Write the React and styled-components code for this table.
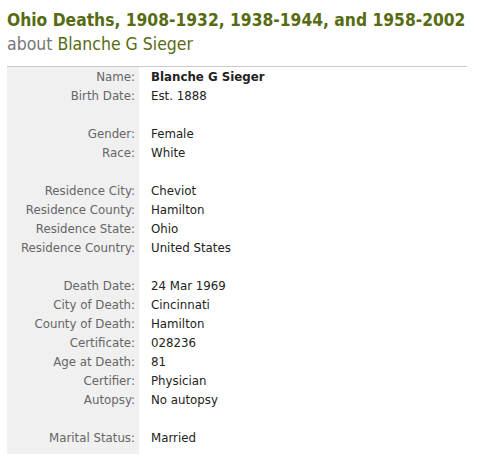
import React from 'react';
import styled, { createGlobalStyle } from 'styled-components';

const GlobalStyle = createGlobalStyle`
  body {
    margin: 0;
    background: #fff;
    font-family: "DejaVu Sans", Verdana, sans-serif;
  }
`

const Page = styled.div`
  padding: 8px 13px 0 7px;
`

const Heading = styled.h1`
  margin: 0;
  font-family: "DejaVu Sans Condensed", "DejaVu Sans", sans-serif;
  font-stretch: condensed;
  font-size: 17.5px;
  line-height: 24px;
  font-weight: normal;
  color: #576b12;
  white-space: nowrap;
`

const Title = styled.span`
  display: block;
  font-size: 17.3px;
  font-weight: bold;
`

const About = styled.span`
  color: #777;
`

const Record = styled.table`
  margin-top: 10px;
  width: 100%;
  border-collapse: collapse;
  border-top: 1px solid #c8c8c8;
  font-size: 11.8px;
`

const Body = styled.tbody`
  & > tr:last-child > td {
    padding-bottom: 7px;
  }
`

const Row = styled.tr``

const Label = styled.td`
  width: 132px;
  padding: 1px 4px 0 0;
  height: 18px;
  line-height: 18px;
  text-align: right;
  vertical-align: top;
  color: #666;
  background: #f0f0f0;
  white-space: nowrap;
  box-sizing: border-box;
`

const Value = styled.td`
  padding: 1px 0 0 12px;
  height: 18px;
  line-height: 18px;
  vertical-align: top;
  color: #222;
  font-weight: ${props => (props.strong ? 'bold' : 'normal')};
`

const rows = [
  ['Name', 'Blanche G Sieger', true],
  ['Birth Date', 'Est. 1888'],
  null,
  ['Gender', 'Female'],
  ['Race', 'White'],
  null,
  ['Residence City', 'Cheviot'],
  ['Residence County', 'Hamilton'],
  ['Residence State', 'Ohio'],
  ['Residence Country', 'United States'],
  null,
  ['Death Date', '24 Mar 1969'],
  ['City of Death', 'Cincinnati'],
  ['County of Death', 'Hamilton'],
  ['Certificate', '028236'],
  ['Age at Death', '81'],
  ['Certifier', 'Physician'],
  ['Autopsy', 'No autopsy'],
  null,
  ['Marital Status', 'Married'],
]

function App() {
  return (
    <Page>
      <GlobalStyle />
      <Heading>
        <Title>Ohio Deaths, 1908-1932, 1938-1944, and 1958-2002</Title>
        <About>about </About>Blanche G Sieger
      </Heading>
      <Record>
        <Body>
          {rows.map((row, i) => row ? (
            <Row key={i}>
              <Label>{row[0]}:</Label>
              <Value strong={row[2]}>{row[1]}</Value>
            </Row>
          ) : (
            <Row key={i}>
              <Label />
              <Value />
            </Row>
          ))}
        </Body>
      </Record>
    </Page>
  )
}

export default App;
